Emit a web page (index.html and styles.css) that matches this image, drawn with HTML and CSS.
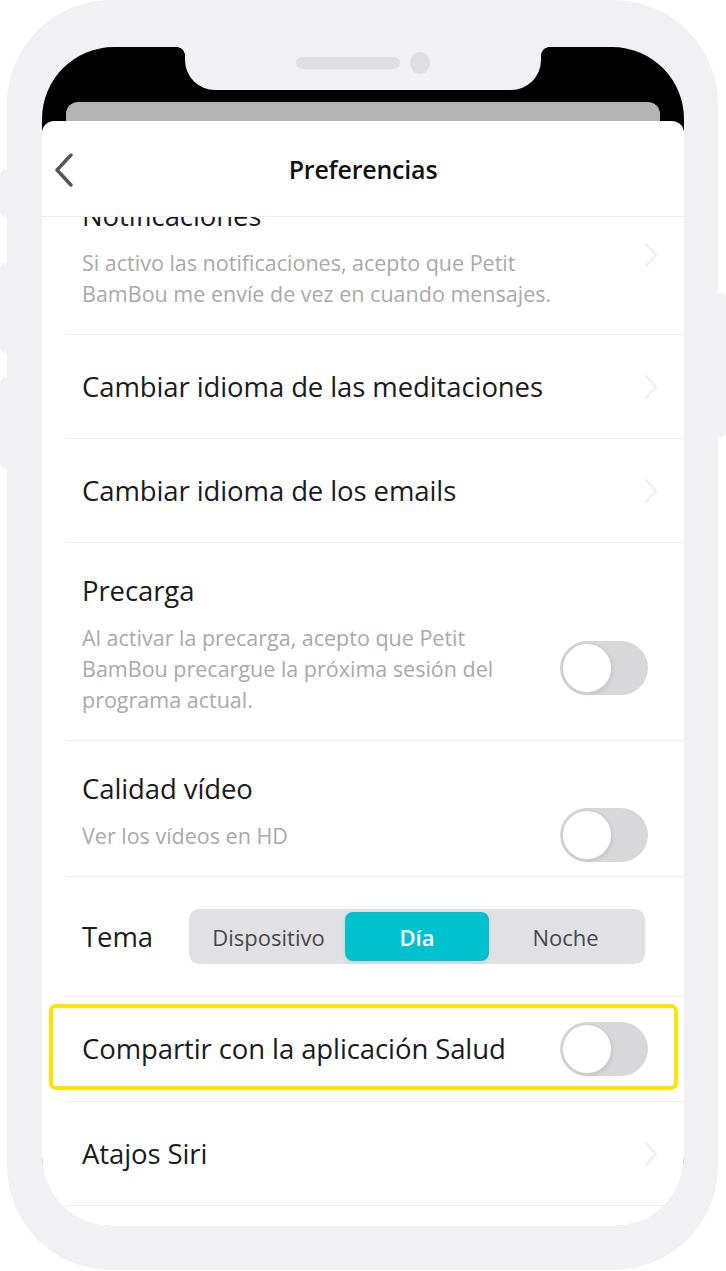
FILE: index.html
```html
<!DOCTYPE html>
<html lang="es">
<head>
<meta charset="utf-8">
<title>Preferencias</title>
<link rel="stylesheet" href="styles.css">
</head>
<body>
<div class="phone">
  <span class="btn btn-l1"></span>
  <span class="btn btn-l2"></span>
  <span class="btn btn-l3"></span>
  <span class="btn btn-r"></span>
  <div class="screen">
    <div class="notch">
      <span class="speaker"></span>
      <span class="camera"></span>
    </div>
    <div class="back-card"></div>
    <div class="sheet">
      <header class="header">
        <svg class="back" width="20" height="34" viewBox="0 0 20 34"><path d="M17 2 L3 17 L17 32" fill="none" stroke="#555" stroke-width="3.4" stroke-linecap="round" stroke-linejoin="round"/></svg>
        <h1 class="title">Preferencias</h1>
      </header>
      <div class="list">
        <div class="row row-first">
          <div class="text">
            <div class="label">Notificaciones</div>
            <div class="desc desc-wide">Si activo las notificaciones, acepto que Petit BamBou me envíe de vez en cuando mensajes.</div>
          </div>
          <svg class="chev" width="14" height="26" viewBox="0 0 14 26"><path d="M2 2 L12 13 L2 24" fill="none" stroke="#f0f0f4" stroke-width="2.4" stroke-linecap="round" stroke-linejoin="round"/></svg>
        </div>
        <div class="row row-simple">
          <div class="label">Cambiar idioma de las meditaciones</div>
          <svg class="chev" width="14" height="26" viewBox="0 0 14 26"><path d="M2 2 L12 13 L2 24" fill="none" stroke="#f0f0f4" stroke-width="2.4" stroke-linecap="round" stroke-linejoin="round"/></svg>
        </div>
        <div class="row row-simple">
          <div class="label">Cambiar idioma de los emails</div>
          <svg class="chev" width="14" height="26" viewBox="0 0 14 26"><path d="M2 2 L12 13 L2 24" fill="none" stroke="#f0f0f4" stroke-width="2.4" stroke-linecap="round" stroke-linejoin="round"/></svg>
        </div>
        <div class="row row-stack">
          <div class="label">Precarga</div>
          <div class="line">
            <div class="desc">Al activar la precarga, acepto que Petit BamBou precargue la próxima sesión del programa actual.</div>
            <span class="toggle"><span class="knob"></span></span>
          </div>
        </div>
        <div class="row row-stack">
          <div class="label">Calidad vídeo</div>
          <div class="line">
            <div class="desc">Ver los vídeos en HD</div>
            <span class="toggle"><span class="knob"></span></span>
          </div>
        </div>
        <div class="row row-theme">
          <div class="label">Tema</div>
          <div class="segmented">
            <span class="seg">Dispositivo</span>
            <span class="seg seg-on">Día</span>
            <span class="seg">Noche</span>
          </div>
        </div>
        <div class="row row-simple row-health">
          <span class="highlight"></span>
          <div class="label">Compartir con la aplicación Salud</div>
          <span class="toggle"><span class="knob"></span></span>
        </div>
        <div class="row row-simple">
          <div class="label">Atajos Siri</div>
          <svg class="chev" width="14" height="26" viewBox="0 0 14 26"><path d="M2 2 L12 13 L2 24" fill="none" stroke="#f0f0f4" stroke-width="2.4" stroke-linecap="round" stroke-linejoin="round"/></svg>
        </div>
      </div>
    </div>
  </div>
</div>
</body>
</html>
```

FILE: styles.css
```css
* { box-sizing: border-box; }
html, body { margin: 0; padding: 0; background: #fff; }
body { font-family: "Open Sans", "Noto Sans", sans-serif; width: 726px; height: 1271px; overflow: hidden; }

.phone {
  position: relative;
  margin-left: 7px;
  width: 711px;
  height: 1270px;
  background: #f1f1f3;
  border-radius: 104px;
  padding: 47px 34px 0 35px;
}
.btn { position: absolute; background: #f1f1f3; }
.btn-l1 { left: -7px; top: 170px; width: 8px; height: 47px; border-radius: 5px 0 0 5px; }
.btn-l2 { left: -7px; top: 263px; width: 8px; height: 90px; border-radius: 5px 0 0 5px; }
.btn-l3 { left: -7px; top: 378px; width: 8px; height: 90px; border-radius: 5px 0 0 5px; }
.btn-r { right: -8px; top: 293px; width: 9px; height: 144px; border-radius: 0 5px 5px 0; }

.screen {
  position: relative;
  height: 1179px;
  background: #000;
  border-radius: 72px;
  padding-top: 55px;
}
.notch {
  position: absolute;
  left: 143px;
  top: 0;
  width: 356px;
  height: 43px;
  background: #f1f1f3;
  border-radius: 0 0 30px 30px;
  display: flex;
  justify-content: center;
  align-items: center;
  gap: 10px;
  padding-bottom: 12px;
}
.notch::before, .notch::after {
  content: "";
  position: absolute;
  top: 0;
  width: 8px;
  height: 8px;
}
.notch::before { left: -8px; background: radial-gradient(circle at 0 100%, transparent 7.5px, #f1f1f3 8px); }
.notch::after { right: -8px; background: radial-gradient(circle at 100% 100%, transparent 7.5px, #f1f1f3 8px); }
.speaker { width: 104px; height: 12px; border-radius: 6px; background: #dedee3; }
.camera { width: 20px; height: 22px; border-radius: 50%; background: #dedee3; }

.back-card {
  margin: 0 24px;
  height: 19px;
  background: #b4b4b4;
  border-radius: 12px 12px 0 0;
}
.sheet {
  height: 1105px;
  background: #fff;
  border-radius: 12px 12px 70px 70px;
  overflow: hidden;
}
.header {
  height: 96px;
  border-bottom: 1px solid #ececef;
  display: flex;
  align-items: center;
  justify-content: center;
  position: relative;
}
.back { position: absolute; left: 12px; top: 32px; }
.title {
  margin: 0;
  font-size: 25px;
  font-weight: 600;
  color: #111;
  letter-spacing: -0.2px;
}

.list { height: 1008px; overflow: hidden; }
.row {
  position: relative;
  margin-left: 24px;
  padding: 0 36px 0 16px;
  border-bottom: 1px solid #eeeef0;
  display: flex;
  align-items: center;
}
.label { font-size: 27.5px; line-height: 32px; color: #1b1b1b; letter-spacing: -0.1px; }
.desc { font-size: 21.5px; line-height: 31px; color: #a9a9ab; max-width: 450px; }
.desc-wide { max-width: 500px; }
.chev { margin-left: auto; margin-right: -10px; }

.row-first { margin-top: -49px; padding-top: 32px; padding-bottom: 25px; }
.row-first .text { display: flex; flex-direction: column; gap: 15px; }
.row-simple { height: 104px; }
.row-stack { flex-direction: column; align-items: stretch; padding-top: 32px; padding-bottom: 25px; gap: 15px; }
.line { display: flex; align-items: center; justify-content: space-between; }
.line .toggle { margin-top: -12px; margin-bottom: -11px; }

.toggle {
  margin-left: auto;
  width: 88px;
  height: 54px;
  border-radius: 27px;
  background: #d8d8da;
  padding: 3px;
  flex-shrink: 0;
  display: flex;
}
.knob {
  width: 48px;
  height: 48px;
  border-radius: 50%;
  background: #fff;
  box-shadow: 0 0 0 1.5px #cfcfd2, 1px 2px 4px rgba(0,0,0,0.12);
}

.row-theme { height: 120px; padding-right: 39px; }
.segmented {
  margin-left: auto;
  width: 456px;
  height: 55px;
  border-radius: 10px;
  background: #e1e1e5;
  padding: 3px;
  display: grid;
  grid-template-columns: 153px 144px 153px;
}
.seg {
  display: flex;
  align-items: center;
  justify-content: center;
  font-size: 22px;
  color: #474747;
  border-radius: 8px;
}
.seg-on {
  background: #00c2cf;
  color: #fff;
  font-weight: 600;
  box-shadow: 0 2px 4px rgba(0,0,0,0.08);
}

.row-health { height: 105px; }
.highlight {
  position: absolute;
  left: -17px;
  right: 6px;
  top: 7px;
  height: 86px;
  border: 4px solid #ffe400;
  border-radius: 7px;
  pointer-events: none;
}
```
